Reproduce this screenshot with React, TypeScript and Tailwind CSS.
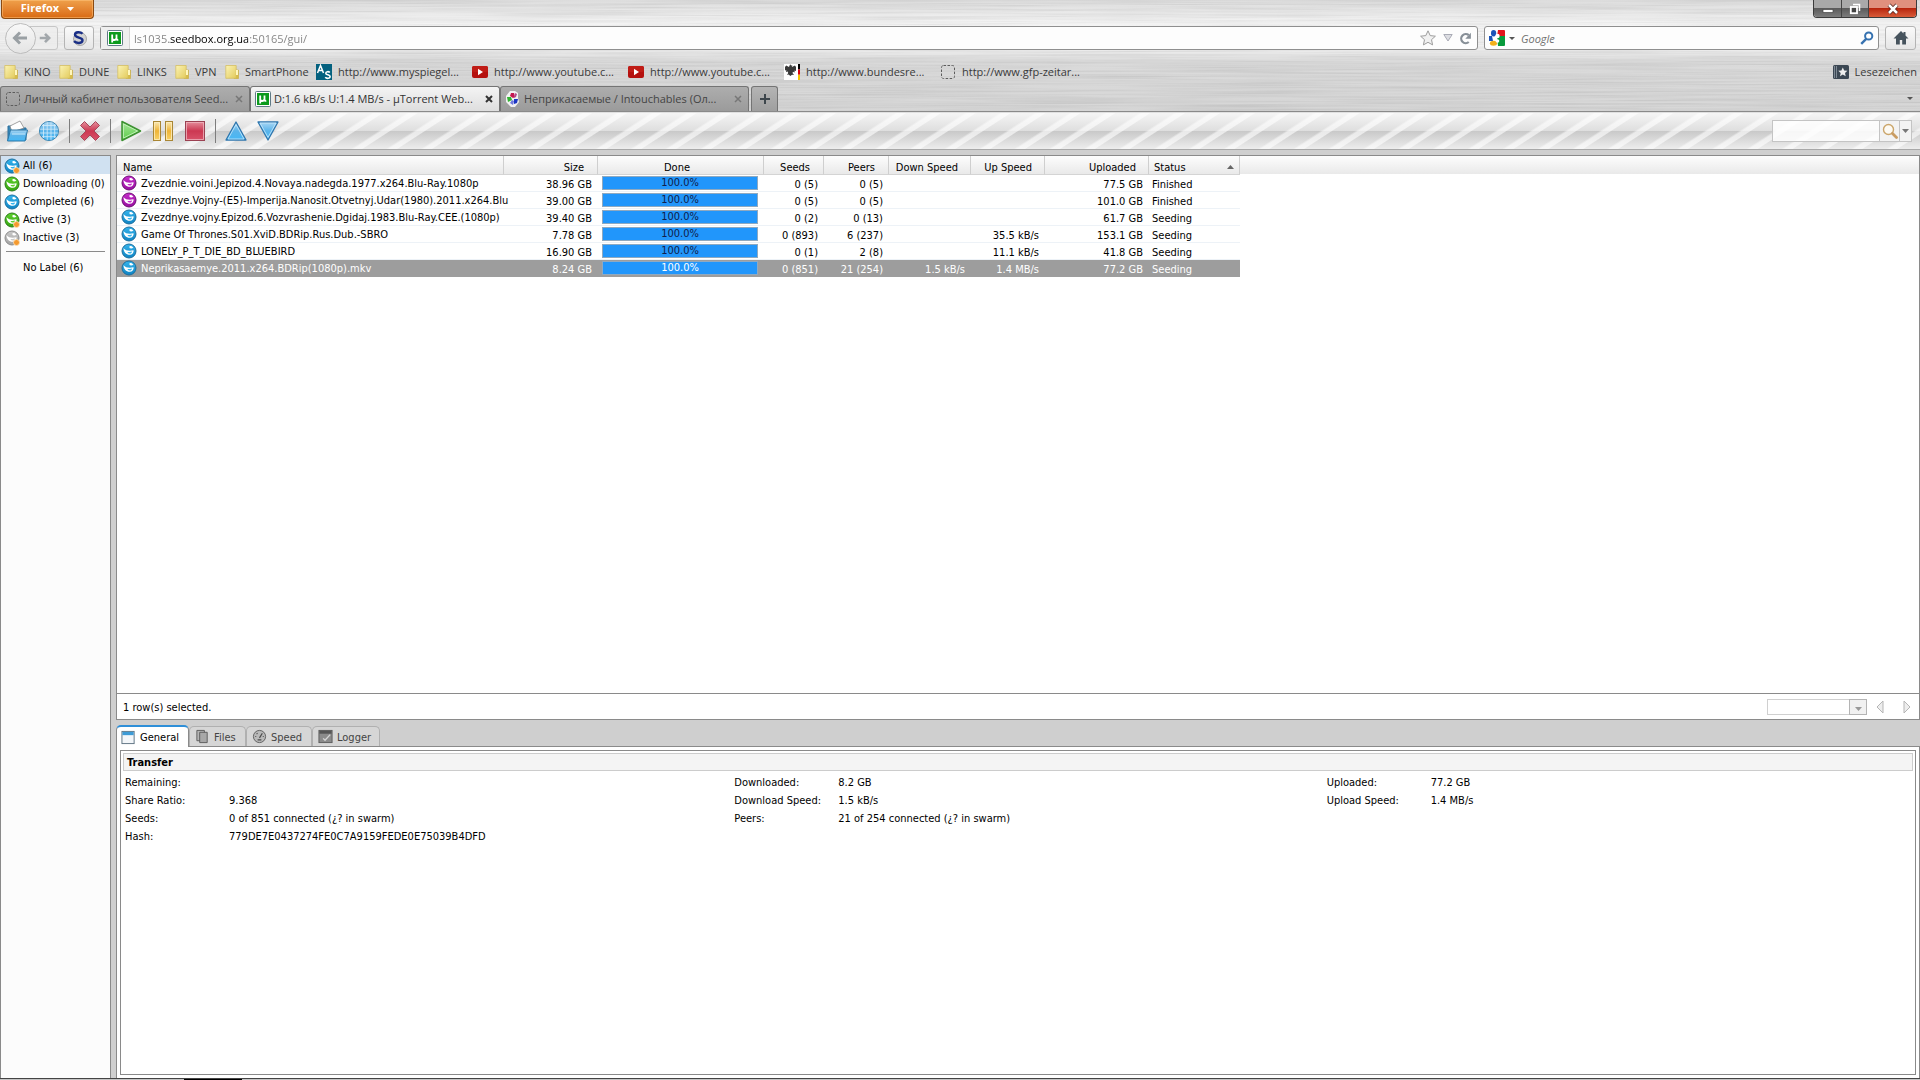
import React from "react";

type IconProps = { className?: string };

/* ---------- browser chrome icons ---------- */

const UTorrentIcon = ({ className = "size-4" }: IconProps) => (
  <svg viewBox="0 0 16 16" className={`${className} shrink-0`} aria-hidden="true">
    <rect x=".5" y=".5" width="15" height="15" rx="1" fill="#fff" stroke="#5f7a86" />
    <rect x="2" y="2" width="12" height="12" fill="#0b9a1c" />
    <path d="M5.2 12.5V4.6M5.2 4.6V8q0 2 2 2t2.300-2V4.600M9.500 8q0 2.200 1.800 1.900" fill="none" stroke="#fff" strokeWidth="1.800" />
  </svg>
);

const FolderMark = () => (
  <svg viewBox="0 0 16 16" className="size-4 shrink-0" aria-hidden="true">
    <defs>
      <linearGradient id="fold" x1="0" y1="0" x2="1" y2="1">
        <stop offset="0" stopColor="#fbf3b4" />
        <stop offset="1" stopColor="#e3cb5c" />
      </linearGradient>
    </defs>
    <path d="M9 6h4.500v8.500H9z" fill="#d9bd45" stroke="#c7aa3d" strokeWidth=".6" />
    <path d="M.8 1.500h10.400v12.800H.8z" fill="url(#fold)" stroke="#d3ba57" strokeWidth=".7" />
    <path d="M11 6h2v5h-2z" fill="#fff7bd" />
  </svg>
);

const DashedBox = () => (
  <svg viewBox="0 0 16 16" className="size-4 shrink-0" aria-hidden="true">
    <rect x="1.500" y="1.500" width="13" height="13" rx="2" fill="none" stroke="#5c5c5c" strokeDasharray="2.500 1.500" />
  </svg>
);

const AsIcon = () => (
  <svg viewBox="0 0 16 16" className="size-4 shrink-0" aria-hidden="true">
    <rect width="16" height="16" fill="#04617f" />
    <path d="M1.500 9 4.500 1.500 7.500 9M2.600 6.500h3.800" fill="none" stroke="#fff" strokeWidth="1.500" />
    <path d="M13.800 8.500c-1-1.200-4-1.200-4 .7 0 2 4.300 1.200 4.300 3.400 0 2.200-3.800 2.200-4.800.6" fill="none" stroke="#fff" strokeWidth="1.600" />
  </svg>
);

const YoutubeIcon = () => (
  <svg viewBox="0 0 16 16" className="size-4 shrink-0" aria-hidden="true">
    <rect y="2" width="16" height="12" rx="2" fill="#b5110f" />
    <rect y="2" width="16" height="6" rx="2" fill="#c01c16" />
    <path d="M6 4.800 11 8l-5 3.200z" fill="#fff" />
  </svg>
);

const EagleIcon = () => (
  <svg viewBox="0 0 16 16" className="size-4 shrink-0" aria-hidden="true">
    <rect width="16" height="16" fill="#fff" />
    <path d="M6 .5c.8 0 1 .6 1 1.300l1.300-.8-.5 2L11 1.500l1 1.500v4l-1.500-.5.2 2-1.700-.8L8.500 9l1.500 2-2-.3L6.300 12l-1.600-1.500L3 11l1.200-2-.5-1.500L2 8l.3-2L1 6.500V3l1.200-1.500L5 3z" fill="#3a3a3a" />
    <path d="M14 0h2v5.400h-2z" fill="#000" />
    <path d="M14 5.400h2v5.300h-2z" fill="#d8000f" />
    <path d="M14 10.700h2V16h-2z" fill="#f7c600" />
  </svg>
);

const PinwheelIcon = () => (
  <svg viewBox="0 0 16 16" className="size-4 shrink-0" aria-hidden="true">
    <path d="M5 0h5l3 2v5l1 4-4 5H6l-5-5V5z" fill="#fff" opacity=".85" />
    <path d="M6 2h3l1 4-2 1-3-2z" fill="#c3194e" />
    <path d="m10 2 2 1-1 3-2 1z" fill="#b34a8c" />
    <path d="m9 8 4 0-1 4-3 1z" fill="#1c35c4" />
    <path d="m7 9 2 1-1 4-3-2z" fill="#6d78dd" />
    <path d="M2 6l4 0 1 3-4 2z" fill="#32b432" />
  </svg>
);

const GoogleIcon = () => (
  <svg viewBox="0 0 16 16" className="size-4 shrink-0" aria-hidden="true">
    <rect width="16" height="16" rx="1" fill="#fff" />
    <path d="M9 0h6q1 0 1 1v5H8z" fill="#e2141c" />
    <path d="M8 6h8v9q0 1-1 1H9z" fill="#079a3c" />
    <path d="M0 6h3l1 5H0z" fill="#1b53b8" />
    <ellipse cx="4.600" cy="3.200" rx="2.600" ry="3.200" fill="#1b53b8" />
    <ellipse cx="4.500" cy="13.300" rx="3.600" ry="2.500" fill="#f2b01b" />
    <circle cx="8.500" cy="6" r="2.200" fill="#fff" />
    <circle cx="8.500" cy="11" r="1.800" fill="#fff" />
  </svg>
);

const Caret = ({ className = "h-[3px] w-[6px]" }: IconProps) => (
  <svg viewBox="0 0 6 3" preserveAspectRatio="none" className={`shrink-0 ${className}`} aria-hidden="true">
    <path d="M0 0h6L3 3z" fill="currentColor" />
  </svg>
);

/* ---------- torrent icons ---------- */

const tones = {
  blue: ["#1b6f9f", "#35b4ec", "#0f84c4"],
  green: ["#2b7d1a", "#5ed02e", "#35a510"],
  purple: ["#6d0f75", "#c52ccb", "#98109f"],
  gray: ["#8d8d8d", "#c9c9c9", "#a3a3a3"],
};

const Torrent = ({ tone, dot }: { tone: keyof typeof tones; dot?: boolean }) => {
  const [edge, light, dark] = tones[tone];
  return (
    <svg viewBox="0 0 16 16" className="size-4 shrink-0" aria-hidden="true">
      <defs>
        <linearGradient id={`t-${tone}`} x1="0" y1="0" x2="0" y2="1">
          <stop offset="0" stopColor={light} />
          <stop offset="1" stopColor={dark} />
        </linearGradient>
      </defs>
      <circle cx="8" cy="8" r="7" fill={`url(#t-${tone})`} stroke={edge} />
      <path d="M2.500 5.200C4.500 7.600 8 8.200 12.600 7.300c.3 2.800-1.500 4.600-4 4.500C5.200 11.700 2.600 9 2.500 5.200z" fill="#fff" />
      <path d="M6.500 8.900c1.800.4 3.200.2 4.600-.3-.2 1.400-1.100 2.100-2.300 2-1-.1-1.900-.7-2.300-1.700z" fill={light} />
      <path d="M8.500 3.200c1.300-.5 3 .2 3.800 1.600-1.200.8-2.800.9-3.800.2z" fill="#fff" />
      {dot && <circle cx="12.500" cy="12.500" r="3" fill="#f59a2f" stroke="#fde3bd" strokeWidth=".8" />}
    </svg>
  );
};

/* ---------- browser window ---------- */

const chromeFont = "font-['Open_Sans',sans-serif] text-[11px]";

const BrushedMetal = () => (
  <svg className="absolute inset-0 h-full w-full opacity-25" aria-hidden="true">
    <filter id="brush" x="0" y="0" width="100%" height="100%">
      <feTurbulence type="fractalNoise" baseFrequency="0.006 0.55" numOctaves="3" seed="4" />
      <feColorMatrix values="0.9 0 0 0 0.36  0.9 0 0 0 0.36  0.9 0 0 0 0.36  0 0 0 0 1" />
    </filter>
    <rect width="100%" height="100%" filter="url(#brush)" />
  </svg>
);

const bookmarks = [
  { icon: <FolderMark />, label: "KINO", w: "w-[55px]" },
  { icon: <FolderMark />, label: "DUNE", w: "w-[58px]" },
  { icon: <FolderMark />, label: "LINKS", w: "w-[58px]" },
  { icon: <FolderMark />, label: "VPN", w: "w-[50px]" },
  { icon: <FolderMark />, label: "SmartPhone", w: "w-[91px]" },
  { icon: <AsIcon />, label: "http://www.myspiegel...", w: "w-[156px]" },
  { icon: <YoutubeIcon />, label: "http://www.youtube.c...", w: "w-[156px]" },
  { icon: <YoutubeIcon />, label: "http://www.youtube.c...", w: "w-[156px]" },
  { icon: <EagleIcon />, label: "http://www.bundesre...", w: "w-[156px]" },
  { icon: <DashedBox />, label: "http://www.gfp-zeitar...", w: "w-[156px]" },
];

const navButton = "flex h-6 items-center justify-center rounded-[3px] border border-[#b4b4b4] bg-linear-to-b from-[#fafafa] to-[#e6e6e6]";

function TitleBar() {
  return (
    <div className="flex items-start justify-between pr-[3px] pl-px">
      <button className="flex h-[19px] w-[93px] items-center justify-center gap-2 rounded-b-[4px] border border-t-0 border-[#8a4a12] bg-linear-to-b from-[#efa04a] to-[#d96a10] pb-px text-[11px] font-bold text-white shadow-[inset_0_0_0_1px_rgba(255,200,130,.5)]">
        Firefox
        <Caret className="h-[4px] w-[7px]" />
      </button>
      <div className="flex h-[18px] overflow-hidden rounded-b-[4px] border border-t-0 border-[#3b3b3b]">
        <button aria-label="Minimize" className="flex w-7 items-center justify-center border-r border-[#444] bg-linear-to-b from-[#a9a9a9] from-50% via-[#5b5b5b] via-50% to-[#7d7d7d]">
          <svg viewBox="0 0 12 12" className="size-3" aria-hidden="true">
            <path d="M1 6.500h10v3H1z" fill="#fff" stroke="#444" strokeWidth=".7" />
          </svg>
        </button>
        <button aria-label="Restore" className="flex w-[27px] items-center justify-center border-r border-[#444] bg-linear-to-b from-[#a9a9a9] from-50% via-[#5b5b5b] via-50% to-[#7d7d7d]">
          <svg viewBox="0 0 12 12" className="size-3" aria-hidden="true">
            <path d="M4 1.500h6.500V8" fill="none" stroke="#fff" strokeWidth="1.500" />
            <rect x="1.800" y="4" width="6.200" height="6.200" fill="#444" stroke="#fff" strokeWidth="1.800" />
          </svg>
        </button>
        <button aria-label="Close" className="flex w-[47px] items-center justify-center bg-linear-to-b from-[#e0907e] from-50% via-[#b8240c] via-50% to-[#d85a38]">
          <svg viewBox="0 0 12 12" className="size-3" aria-hidden="true">
            <path d="m2 2 8 8M10 2l-8 8" stroke="#50201a" strokeWidth="4" />
            <path d="m2 2 8 8M10 2l-8 8" stroke="#fff" strokeWidth="2.500" />
          </svg>
        </button>
      </div>
    </div>
  );
}

function NavBar() {
  return (
    <div className="flex h-[38px] items-center pr-1 pl-[5px]">
      <button aria-label="Back" className="relative z-10 flex size-[31px] items-center justify-center rounded-full border border-[#bcbcbc] bg-linear-to-b from-[#f8f8f8] to-[#e4e4e4] pr-[2px]">
        <svg viewBox="0 0 16 16" className="size-4" aria-hidden="true">
          <path d="M15 8H3M8 2.500 2.500 8 8 13.500" fill="none" stroke="#9aa0a4" strokeWidth="3" />
        </svg>
      </button>
      <button aria-label="Forward" className="-ml-2 flex h-6 w-[30px] items-center justify-end rounded-r-[3px] border border-[#c6c6c6] bg-[#ececec]/70 pr-[6px]">
        <svg viewBox="0 0 16 16" className="size-3" aria-hidden="true">
          <path d="M1 8h12M8 2.500 13.500 8 8 13.500" fill="none" stroke="#a2a7ab" strokeWidth="3.600" />
        </svg>
      </button>
      <button aria-label="Scribe" className={`${navButton} ml-[6px] w-[30px]`}>
        <svg viewBox="0 0 16 16" className="size-4" aria-hidden="true">
          <circle cx="9" cy="9" r="6.500" fill="#d3d3d3" stroke="#999" strokeWidth=".8" />
          <path d="M11.500 3.800C9.500 1.600 4 1.600 4 4.800c0 3.400 7.500 2.200 7.500 5.400 0 3.400-6 3.600-8.500 1" fill="none" stroke="#1a2f86" strokeWidth="2.400" />
        </svg>
      </button>
      <div className="ml-[6px] flex h-6 flex-1 items-center rounded-[3px] border border-[#8f8f8f] bg-[#fdfdfd]">
        <span className="flex h-full w-[29px] items-center justify-center border-r border-[#d5d5d5] bg-[#efefef]">
          <UTorrentIcon />
        </span>
        <input
          aria-label="Address"
          defaultValue="ls1035.seedbox.org.ua:50165/gui/"
          className="h-full flex-1 bg-[linear-gradient(90deg,#808080_0_39px,#000_39px_118px,#808080_118px)] bg-clip-text pl-1 text-transparent caret-black outline-none"
        />
        <button aria-label="Bookmark this page" className="mr-[7px]">
          <svg viewBox="0 0 16 16" className="size-4" aria-hidden="true">
            <path d="m8 .8 2.200 4.800 5.200.6-3.900 3.500 1.100 5.200L8 12.300l-4.600 2.600 1.100-5.200L.6 6.200l5.200-.6z" fill="#f1f1f1" stroke="#9d9d9d" />
          </svg>
        </button>
        <button aria-label="Show history" className="mr-[6px]">
          <svg viewBox="0 0 10 8" className="h-2 w-[10px]" aria-hidden="true">
            <path d="M.8.5h8.400L5 7z" fill="#dcdde2" stroke="#a9abb5" />
          </svg>
        </button>
        <button aria-label="Reload" className="mr-[5px]">
          <svg viewBox="0 0 14 14" className="size-[13px]" aria-hidden="true">
            <path d="M10.500 10.800A4.900 4.900 0 1 1 10.500 3.400" fill="none" stroke="#878f97" strokeWidth="2.400" />
            <path d="M12.800.8v6.400H6.800z" fill="#878f97" />
          </svg>
        </button>
      </div>
      <div className="ml-[6px] flex h-6 w-[395px] items-center rounded-[3px] border border-[#8f8f8f] bg-[#fdfdfd] pl-1">
        <GoogleIcon />
        <button aria-label="Choose search engine" className="ml-1 text-[#555]">
          <Caret />
        </button>
        <input aria-label="Search the web" placeholder="Google" className="ml-[6px] h-full flex-1 italic outline-none placeholder:text-[#707070]" />
        <button aria-label="Search" className="mr-1">
          <svg viewBox="0 0 14 14" className="size-[14px]" aria-hidden="true">
            <circle cx="8.700" cy="5" r="3.600" fill="#fff" stroke="#3672b0" strokeWidth="2" />
            <path d="M6.200 7.800 1.200 12.800" stroke="#3672b0" strokeWidth="2.400" />
          </svg>
        </button>
      </div>
      <button aria-label="Home" className={`${navButton} ml-[6px] w-[31px]`}>
        <svg viewBox="0 0 16 16" className="size-4" aria-hidden="true">
          <path d="M8 1 .5 8.500H3V14.500h3.800V10h2.400v4.500H13V8.500h2.500L12.500 5.500V2h-2v1.500z" fill="#46535d" />
        </svg>
      </button>
    </div>
  );
}

function BookmarksBar() {
  return (
    <nav aria-label="Bookmarks" className="flex h-[29px] items-center justify-between pt-px pr-[3px] pl-1 text-[#3a3a3a]">
      <div className="flex">
        {bookmarks.map((b, i) => (
          <a key={i} href="#" className={`flex shrink-0 items-center whitespace-nowrap ${i < 5 ? "gap-1" : "gap-[6px]"} ${b.w}`}>
            {b.icon}
            {b.label}
          </a>
        ))}
      </div>
      <a href="#" className="flex items-center gap-[6px]">
        <svg viewBox="0 0 16 14" className="h-[14px] w-4" aria-hidden="true">
          <rect width="16" height="14" rx="1.500" fill="#3b4753" />
          <path d="M1.500 1v12M3.500 1v12" stroke="#7d8893" />
          <path d="m9.800 2.500 1.400 3 3.200.3-2.400 2.200.7 3.200-2.900-1.700-2.800 1.700.7-3.200-2.400-2.200 3.100-.3z" fill="#eee" />
        </svg>
        Lesezeichen
      </a>
    </nav>
  );
}

const browserTabs = [
  { icon: <DashedBox />, label: "Личный кабинет пользователя Seed...", w: "w-[250px]", active: false },
  { icon: <UTorrentIcon />, label: "D:1.6 kB/s U:1.4 MB/s - µTorrent Web...", w: "w-[250px]", active: true },
  { icon: <PinwheelIcon />, label: "Неприкасаемые / Intouchables (Ол...", w: "w-[249px]", active: false },
];

function TabStrip() {
  return (
    <div className="flex items-end justify-between border-b border-[#8a8a8a] pr-[6px]">
      <div className="flex h-[25px]">
        {browserTabs.map((t) => (
          <div
            key={t.label}
            className={`flex items-center rounded-t-[3px] border border-b-0 border-[#747474] pr-1 pl-[4px] ${t.w} ${
              t.active ? "bg-linear-to-b from-[#f4f4f4] to-[#dedede] text-[#333]" : "bg-linear-to-b from-[#adadad] to-[#9b9b9b] text-[#444]"
            }`}
          >
            {t.icon}
            <a href="#" className="ml-[3px] flex-1 truncate">
              {t.label}
            </a>
            <button aria-label="Close tab" className="p-[2px]">
              <svg viewBox="0 0 8 8" className="size-2" aria-hidden="true">
                <path d="m1 1 6 6M7 1 1 7" stroke={t.active ? "#333" : "#777"} strokeWidth={t.active ? 2 : 1.500} />
              </svg>
            </button>
          </div>
        ))}
        <button aria-label="New tab" className="ml-[2px] flex w-[27px] items-center justify-center rounded-t-[3px] border border-b-0 border-[#747474] bg-linear-to-b from-[#b4b4b4] to-[#9f9f9f]">
          <svg viewBox="0 0 10 10" className="size-[10px]" aria-hidden="true">
            <path d="M5 0v10M0 5h10" stroke="#3d464c" strokeWidth="2" />
          </svg>
        </button>
      </div>
      <button aria-label="List all tabs" className="self-center pr-px text-[#555]">
        <Caret />
      </button>
    </div>
  );
}

/* ---------- µTorrent toolbar ---------- */

const toolDefs = (
  <svg className="absolute size-0" aria-hidden="true">
    <defs>
      <linearGradient id="gb" x1="0" y1="0" x2="0" y2="1">
        <stop offset="0" stopColor="#a9d6f4" />
        <stop offset=".5" stopColor="#5ab4ea" />
        <stop offset="1" stopColor="#45b8f6" />
      </linearGradient>
      <linearGradient id="gr" x1="0" y1="0" x2="0" y2="1">
        <stop offset="0" stopColor="#e5909d" />
        <stop offset=".5" stopColor="#cc3852" />
        <stop offset="1" stopColor="#d8536a" />
      </linearGradient>
      <linearGradient id="gg" x1="0" y1="0" x2="0" y2="1">
        <stop offset="0" stopColor="#a8e69a" />
        <stop offset="1" stopColor="#5acb48" />
      </linearGradient>
      <linearGradient id="gy" x1="0" y1="0" x2="0" y2="1">
        <stop offset="0" stopColor="#fbe9b4" />
        <stop offset=".5" stopColor="#eeb437" />
        <stop offset="1" stopColor="#f9d368" />
      </linearGradient>
    </defs>
  </svg>
);

const toolGroups: { label: string; art: React.ReactNode }[][] = [
  [
    {
      label: "Add torrent",
      art: (
        <>
          <path d="M2 6h7l1.500 2H20v12H2z" fill="#3a88b8" stroke="#2a6f9b" />
          <path d="m4 6 10-5 4 7-12 4z" fill="#fff" stroke="#8b8b8b" strokeWidth=".8" />
          <path d="M4.500 10H21.500L19 21H1.500z" fill="url(#gb)" stroke="#2c78a8" />
          <path d="M6 14h13" stroke="#c8e8fa" />
        </>
      ),
    },
    {
      label: "Add torrent from URL",
      art: (
        <>
          <circle cx="11" cy="11" r="9.500" fill="url(#gb)" stroke="#3b86b3" />
          <path d="M5.500 4v14M9.200 2v18M13 2v18M16.700 4v14M4 5.500h14M2 9.200h18M2 13h18M4 16.700h14" stroke="#d4ecfa" strokeWidth=".8" />
        </>
      ),
    },
  ],
  [
    {
      label: "Remove",
      art: <path d="M5.500 1.500 11 7l5.500-5.500 4 4L15 11l5.500 5.500-4 4L11 15l-5.500 5.500-4-4L7 11 1.500 5.500z" fill="url(#gr)" stroke="#a5495a" strokeLinejoin="round" />,
    },
  ],
  [
    {
      label: "Start",
      art: (
        <>
          <path d="M2 1.500 20.500 11 2 20.500z" fill="url(#gg)" stroke="#3d9132" strokeWidth="1.500" strokeLinejoin="round" />
          <path d="M3.500 4 17.500 11 3.500 18z" fill="none" stroke="#c8f3bf" strokeWidth=".8" />
        </>
      ),
    },
    {
      label: "Pause",
      art: (
        <>
          <rect x="1.500" y="1.500" width="7" height="19" fill="url(#gy)" stroke="#a98634" />
          <rect x="13.500" y="1.500" width="7" height="19" fill="url(#gy)" stroke="#a98634" />
          <path d="M2.500 2.500h5v17h-5zM14.500 2.500h5v17h-5z" fill="none" stroke="#fdeec0" strokeWidth=".8" />
        </>
      ),
    },
    {
      label: "Stop",
      art: (
        <>
          <rect x="1.500" y="1.500" width="19" height="19" fill="url(#gr)" stroke="#9b4152" />
          <rect x="2.500" y="2.500" width="17" height="17" fill="none" stroke="#eeb4bd" strokeWidth=".8" />
        </>
      ),
    },
  ],
  [
    {
      label: "Move up queue",
      art: (
        <>
          <path d="M11 2 21 20H1z" fill="url(#gb)" stroke="#2f76ad" strokeWidth="1.300" strokeLinejoin="round" />
          <path d="M11 4.600 19 19H3z" fill="none" stroke="#c9e8fb" strokeWidth=".8" />
        </>
      ),
    },
    {
      label: "Move down queue",
      art: (
        <>
          <path d="M11 20 21 2H1z" fill="url(#gb)" stroke="#2f76ad" strokeWidth="1.300" strokeLinejoin="round" />
          <path d="M11 17.400 19 3H3z" fill="none" stroke="#c9e8fb" strokeWidth=".8" />
        </>
      ),
    },
  ],
];

function Toolbar() {
  return (
    <div className="flex h-[38px] items-center justify-between border-t border-b border-[#a8a8a8] border-t-[#e0e0e0] bg-[repeating-linear-gradient(147deg,transparent_0_12px,rgba(255,255,255,.6)_14px_18px,transparent_19px),linear-gradient(to_bottom,#f5f5f5,#dedede_50%,#c9c9c9_51%,#ededed)] pr-[8px] pl-[6px]">
      {toolDefs}
      <div role="toolbar" aria-label="Torrent actions" className="flex items-center">
        {toolGroups.map((group, gi) => (
          <div key={gi} className="flex items-center">
            {gi > 0 && <span className="mx-[9px] h-6 w-px bg-[#7d7d7d]" />}
            <div className="flex gap-[10px]">
              {group.map((t) => (
                <button key={t.label} aria-label={t.label}>
                  <svg viewBox="0 0 22 22" className="size-[22px]" aria-hidden="true">
                    {t.art}
                  </svg>
                </button>
              ))}
            </div>
          </div>
        ))}
      </div>
      <div className="flex h-[22px] border border-[#c4c4c4]">
        <input aria-label="Search torrents" className="w-[106px] bg-white/85 outline-none" />
        <button aria-label="Search" className="flex w-[21px] items-center justify-center border-x border-[#c4c4c4] bg-[#f3f3f3]">
          <svg viewBox="0 0 16 16" className="size-4" aria-hidden="true">
            <circle cx="6.500" cy="6.500" r="5" fill="#fdfaf3" stroke="#cba66b" strokeWidth="1.400" />
            <path d="m10.500 10.500 4 4" stroke="#c99c62" strokeWidth="2.800" strokeLinecap="round" />
          </svg>
        </button>
        <button aria-label="Choose search site" className="flex w-[11px] items-center justify-center bg-[#f3f3f3] text-[#777]">
          <Caret className="h-[4px] w-[7px]" />
        </button>
      </div>
    </div>
  );
}

/* ---------- µTorrent content ---------- */

const categories: { label: string; tone: keyof typeof tones; dot?: boolean }[] = [
  { label: "All (6)", tone: "blue", dot: true },
  { label: "Downloading (0)", tone: "green" },
  { label: "Completed (6)", tone: "blue" },
  { label: "Active (3)", tone: "green", dot: true },
  { label: "Inactive (3)", tone: "gray", dot: true },
];

function Sidebar() {
  return (
    <aside className="w-[111px] shrink-0 border border-b-0 border-[#8a8a8a] bg-[#fcfcfc]">
      <ul>
        {categories.map((c, i) => (
          <li key={c.label}>
            <a href="#" className={`flex h-[18px] items-center gap-[3px] pt-px pl-[3px] whitespace-nowrap ${i === 0 ? "bg-[#d0e1f1]" : ""}`}>
              <Torrent tone={c.tone} dot={c.dot} />
              {c.label}
            </a>
          </li>
        ))}
      </ul>
      <hr className="mx-[5px] mt-[5px] mb-[6px] border-[#8a8a8a]" />
      <a href="#" className="flex h-[18px] items-center pl-[22px]">
        No Label (6)
      </a>
    </aside>
  );
}

const columns: { label: string; w: string; head: string; cell: string }[] = [
  { label: "Name", w: "w-[387px]", head: "text-left pl-[6px]", cell: "pl-[4px]" },
  { label: "Size", w: "w-[94px]", head: "text-right pr-[13px]", cell: "text-right pr-[6px]" },
  { label: "Done", w: "w-[166px]", head: "text-center pr-[7px]", cell: "px-[4px]" },
  { label: "Seeds", w: "w-[60px]", head: "text-right pr-[13px]", cell: "text-right pr-[6px]" },
  { label: "Peers", w: "w-[65px]", head: "text-right pr-[13px]", cell: "text-right pr-[6px]" },
  { label: "Down Speed", w: "w-[82px]", head: "text-right pr-[12px]", cell: "text-right pr-[6px]" },
  { label: "Up Speed", w: "w-[74px]", head: "text-right pr-[12px]", cell: "text-right pr-[6px]" },
  { label: "Uploaded", w: "w-[104px]", head: "text-right pr-[12px]", cell: "text-right pr-[6px]" },
  { label: "Status", w: "w-[91px]", head: "text-left pl-[5px]", cell: "pl-[3px]" },
];

const torrents: { tone: keyof typeof tones; cells: string[] }[] = [
  { tone: "purple", cells: ["Zvezdnie.voini.Jepizod.4.Novaya.nadegda.1977.x264.Blu-Ray.1080p", "38.96 GB", "100.0%", "0 (5)", "0 (5)", "", "", "77.5 GB", "Finished"] },
  { tone: "purple", cells: ["Zvezdnye.Vojny-(E5)-Imperija.Nanosit.Otvetnyj.Udar(1980).2011.x264.Blu", "39.00 GB", "100.0%", "0 (5)", "0 (5)", "", "", "101.0 GB", "Finished"] },
  { tone: "blue", cells: ["Zvezdnye.vojny.Epizod.6.Vozvrashenie.Dgidaj.1983.Blu-Ray.CEE.(1080p)", "39.40 GB", "100.0%", "0 (2)", "0 (13)", "", "", "61.7 GB", "Seeding"] },
  { tone: "blue", cells: ["Game Of Thrones.S01.XviD.BDRip.Rus.Dub.-SBRO", "7.78 GB", "100.0%", "0 (893)", "6 (237)", "", "35.5 kB/s", "153.1 GB", "Seeding"] },
  { tone: "blue", cells: ["LONELY_P_T_DIE_BD_BLUEBIRD", "16.90 GB", "100.0%", "0 (1)", "2 (8)", "", "11.1 kB/s", "41.8 GB", "Seeding"] },
  { tone: "blue", cells: ["Neprikasaemye.2011.x264.BDRip(1080p).mkv", "8.24 GB", "100.0%", "0 (851)", "21 (254)", "1.5 kB/s", "1.4 MB/s", "77.2 GB", "Seeding"] },
];

function TorrentList() {
  return (
    <section className="flex h-[565px] flex-col border border-[#8a8a8a] bg-white">
      <div className="flex-1 bg-[linear-gradient(to_bottom,#fdfdfd,#e9e9e9)] bg-[length:100%_18px] bg-no-repeat">
        <table className="w-[1123px] table-fixed border-separate border-spacing-0 whitespace-nowrap">
          <thead>
            <tr className="h-[19px]">
              {columns.map((c) => (
                <th key={c.label} scope="col" className={`overflow-hidden border-r border-b border-r-[#cfcfcf] border-b-[#d4d4d4] pt-[4px] pb-0 font-normal ${c.w} ${c.head}`}>
                  {c.label === "Status" ? (
                    <span className="flex items-center justify-between pr-[5px]">
                      Status
                      <Caret className="h-[4px] w-[7px] rotate-180 text-[#666]" />
                    </span>
                  ) : (
                    c.label
                  )}
                </th>
              ))}
            </tr>
          </thead>
          <tbody>
            {torrents.map((t, ri) => {
              const selected = ri === torrents.length - 1;
              return (
                <tr key={t.cells[0]} className={`h-[17px] ${selected ? "bg-[#9d9d9d] text-white" : ""}`}>
                  {t.cells.map((v, ci) => (
                    <td key={ci} className={`border-b pb-0 ${selected ? "border-[#9d9d9d]" : "border-[#edf2f7]"} ${ci === 0 || ci === 2 ? "pt-0" : "pt-[2px]"} ${columns[ci].cell}`}>
                      {ci === 0 ? (
                        <span className="flex h-4 items-center gap-1">
                          <Torrent tone={t.tone} />
                          <span className="pt-px">{v}</span>
                        </span>
                      ) : ci === 2 ? (
                        <span className={`mr-[2px] block h-[14px] border border-[#8fa9c0] bg-[#2196fb] text-center leading-[12px] ${selected ? "text-white" : "text-[#10204a]"}`}>{v}</span>
                      ) : (
                        v
                      )}
                    </td>
                  ))}
                </tr>
              );
            })}
          </tbody>
        </table>
      </div>
      <footer className="flex h-[26px] shrink-0 items-center justify-between border-t border-[#8a8a8a] pr-2 pl-[6px]">
        <span className="pt-px">1 row(s) selected.</span>
        <div className="flex items-center">
          <span className="relative flex">
            <select aria-label="Page" className="h-4 w-[100px] appearance-none border border-[#d0d0d0] bg-white" />
            <span className="pointer-events-none absolute inset-y-0 right-0 flex w-[18px] items-end justify-center border border-[#b4b4b4] bg-[#f1f1f1] pb-[3px] text-[#999]">
              <Caret className="h-[4px] w-[7px]" />
            </span>
          </span>
          <button aria-label="Previous page" className="ml-[9px]">
            <svg viewBox="0 0 8 14" className="h-[14px] w-2" aria-hidden="true">
              <path d="M7 1v12L1 7z" fill="#eee" stroke="#b5b5b5" />
            </svg>
          </button>
          <button aria-label="Next page" className="ml-[19px]">
            <svg viewBox="0 0 8 14" className="h-[14px] w-2" aria-hidden="true">
              <path d="M1 1v12l6-6z" fill="#eee" stroke="#b5b5b5" />
            </svg>
          </button>
        </div>
      </footer>
    </section>
  );
}

const detailTabs = [
  {
    label: "General",
    w: "w-[73px]",
    art: (
      <>
        <rect x="1" y="1.500" width="13" height="13" fill="#f3f6f9" stroke="#5c7180" />
        <path d="M1.500 2h12v3.500h-12z" fill="#3d9bd6" />
      </>
    ),
  },
  {
    label: "Files",
    w: "w-[57px]",
    art: (
      <>
        <path d="M2 1.500h8v11H2z" fill="#b5b5b5" stroke="#5c5c5c" />
        <path d="M5 3.500h8v11H5z" fill="#a8a8a8" stroke="#5c5c5c" />
      </>
    ),
  },
  {
    label: "Speed",
    w: "w-[66px]",
    art: (
      <>
        <circle cx="8" cy="8" r="6.500" fill="#b9b9b9" stroke="#5c5c5c" />
        <path d="M8 9.500 11 4.500M3.500 8h1M5 4.500l.8.8M11.500 8h1M6 11.500h4" stroke="#4c4c4c" strokeWidth="1.300" />
      </>
    ),
  },
  {
    label: "Logger",
    w: "w-[68px]",
    art: (
      <>
        <rect x="1" y="1.500" width="14" height="13" fill="#8b8b8b" stroke="#5c5c5c" />
        <path d="M1.500 2h13v3h-13z" fill="#555" />
        <path d="m5.500 10 2 2L13 6" fill="none" stroke="#d5d5d5" strokeWidth="1.500" />
      </>
    ),
  },
];

const transfer: [string, string][][] = [
  [["Remaining:", ""], ["Share Ratio:", "9.368"], ["Seeds:", "0 of 851 connected (¿? in swarm)"], ["Hash:", "779DE7E0437274FE0C7A9159FEDE0E75039B4DFD"]],
  [["Downloaded:", "8.2 GB"], ["Download Speed:", "1.5 kB/s"], ["Peers:", "21 of 254 connected (¿? in swarm)"]],
  [["Uploaded:", "77.2 GB"], ["Upload Speed:", "1.4 MB/s"]],
];

function Details() {
  return (
    <section className="flex flex-1 flex-col pt-[5px]">
      <div role="tablist" className="flex h-[21px] items-end">
        {detailTabs.map((t, i) => (
          <button
            key={t.label}
            role="tab"
            aria-selected={i === 0}
            className={`flex items-center gap-1 rounded-t-[5px] border ${t.w} ${
              i === 0
                ? "relative z-10 -mb-px h-[22px] border-t-2 border-b-0 border-[#8a8a8a] border-t-[#2f8fd8] bg-white pl-[4px] text-black"
                : "h-5 border-b-0 border-[#b0b0b0] bg-[#d6d6d6] pl-[5px] text-[#444]"
            }`}
          >
            <svg viewBox="0 0 16 16" className="size-[15px] shrink-0" aria-hidden="true">
              {t.art}
            </svg>
            <span className="pt-px">{t.label}</span>
          </button>
        ))}
      </div>
      <div className="flex flex-1 flex-col border border-b-0 border-[#8a8a8a] bg-white p-[3px]">
        <div role="tabpanel" className="flex-1 border border-[#8a8a8a] p-[2px]">
          <h2 className="h-[18px] border border-[#cccccc] bg-[#f4f4f4] pl-[3px] text-[11px] leading-[18px] font-bold">Transfer</h2>
          <div className="grid grid-cols-[609fr_592fr_586fr] pt-[3px] pl-[2px]">
            {transfer.map((group, gi) => (
              <dl key={gi} className="grid auto-rows-[18px] grid-cols-[104px_1fr] content-start leading-[18px]">
                {group.map(([k, v]) => (
                  <React.Fragment key={k}>
                    <dt>{k}</dt>
                    <dd>{v}</dd>
                  </React.Fragment>
                ))}
              </dl>
            ))}
          </div>
        </div>
      </div>
    </section>
  );
}

export default function App() {
  return (
    <div className="flex min-h-screen flex-col bg-[#cfcfcf] text-black">
      <header className={`relative bg-[linear-gradient(to_bottom,#d2d2d2,#f2f2f2_24px,#ebebeb_48px,#cfcfcf_62px,#cacaca)] ${chromeFont}`}>
        <BrushedMetal />
        <div className="relative">
          <TitleBar />
          <NavBar />
          <BookmarksBar />
          <TabStrip />
        </div>
      </header>
      <main className="flex flex-1 flex-col font-['DejaVu_Sans_Condensed',Tahoma,sans-serif] text-[11px] leading-[13px]">
        <Toolbar />
        <div className="flex flex-1 gap-[5px] pt-[5px]">
          <Sidebar />
          <div className="flex min-w-0 flex-1 flex-col">
            <TorrentList />
            <Details />
          </div>
        </div>
      </main>
      <footer className="flex h-[2px] border-t border-[#444] bg-[#c4c4c4] pl-[184px]">
        <span className="h-px w-[58px] bg-black" />
      </footer>
    </div>
  );
}
